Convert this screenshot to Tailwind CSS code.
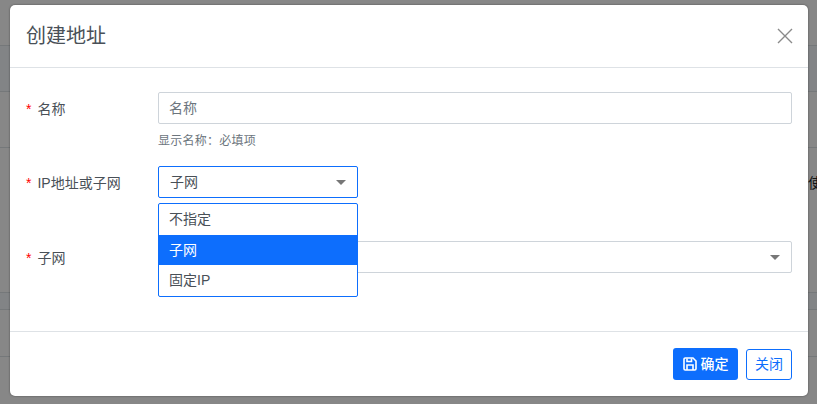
<!DOCTYPE html>
<html lang="zh">
<head>
    <meta charset="UTF-8">
    <title>创建地址</title>
    <script src="https://cdn.jsdelivr.net/npm/@tailwindcss/browser@4"></script>
</head>
<body class="relative w-[817px] h-[404px] overflow-hidden bg-white font-['Liberation_Sans','Noto_Sans_CJK_SC',sans-serif] text-[14px] text-[#212529]">
    <!-- page behind the dialog -->
    <div class="absolute inset-0 bg-white">
        <div class="absolute inset-x-0 top-[45px] h-[47px] border-y border-[#dee2e6] bg-[#f6fafe]"></div>
        <div class="absolute inset-x-0 top-[92px] h-[56px] border-b border-[#dee2e6]"></div>
        <div class="absolute inset-x-0 top-[292px] h-[18px] border-y border-[#dee2e6] bg-[#f6fafe]"></div>
        <div class="absolute inset-x-0 top-[309px] h-[48px] border-b border-[#dee2e6]"></div>
        <div class="absolute right-0 top-[174px] w-[9px] overflow-hidden text-[14px] leading-[18px] text-[#212529]">使</div>
    </div>
    <div class="absolute inset-0 bg-black/47"></div>

    <!-- dialog -->
    <div class="absolute left-[10px] top-[5px] flex h-[391px] w-[798px] flex-col rounded-[5px] bg-white shadow-[0_0_2px_rgba(0,0,0,0.5)]">
        <div class="flex h-[63px] items-center justify-between border-b border-[#dee2e6] pl-[16px] pr-[15px]">
            <h5 class="text-[20px] leading-[24px] text-[#495057]">创建地址</h5>
            <svg class="h-[16px] w-[16px]" viewBox="0 0 16 16" fill="none" stroke="#8a8a8a" stroke-width="1.4"><path d="M1 1L15 15M15 1L1 15"/></svg>
        </div>

        <div class="flex-1 px-[16px] pt-[24px]">
            <div class="flex">
                <label class="flex h-[32px] w-[132px] items-center pt-[2px] text-[#495057]"><span class="mr-[6px] text-[#f00]">*</span>名称</label>
                <div class="flex-1">
                    <div class="flex h-[32px] items-center rounded-[2px] border border-[#ced4da] px-[10px] text-[#6c757d]">名称</div>
                    <p class="mt-[8px] text-[12px] leading-[18px] tracking-[0.25px] text-[#6c757d]">显示名称：必填项</p>
                </div>
            </div>

            <div class="relative mt-[16px] flex">
                <label class="flex h-[32px] w-[132px] items-center pt-[2px] text-[#495057]"><span class="mr-[6px] text-[#f00]">*</span>IP地址或子网</label>
                <div class="flex h-[32px] w-[200px] items-center justify-between rounded-[2px] border border-[#0d6efd] pl-[11px] pr-[11px] text-[#495057]">
                    <span>子网</span>
                    <span class="h-0 w-0 border-x-[5px] border-t-[5px] border-x-transparent border-t-[#777]"></span>
                </div>
                <!-- open dropdown -->
                <ul class="absolute left-[132px] top-[37px] z-10 w-[200px] rounded-[2px] border border-[#0d6efd] bg-white text-[#495057]">
                    <li class="flex h-[31px] items-center pl-[10px]">不指定</li>
                    <li class="flex h-[30px] items-center bg-[#0d6efd] pl-[10px] text-white">子网</li>
                    <li class="flex h-[31px] items-center pl-[10px]">固定IP</li>
                </ul>
            </div>

            <div class="mt-[43px] flex">
                <label class="flex h-[32px] w-[132px] items-center pt-[2px] text-[#495057]"><span class="mr-[6px] text-[#f00]">*</span>子网</label>
                <div class="flex h-[32px] flex-1 items-center justify-end rounded-[2px] border border-[#ced4da] pr-[11px]">
                    <span class="h-0 w-0 border-x-[5px] border-t-[5px] border-x-transparent border-t-[#777]"></span>
                </div>
            </div>
        </div>

        <div class="flex h-[65px] items-center justify-end gap-[8px] border-t border-[#dee2e6] pr-[16px]">
            <button class="flex h-[32px] w-[65px] items-center justify-center gap-[4px] rounded-[3px] bg-[#0d6efd] font-medium text-white">
                <svg class="h-[14px] w-[14px]" viewBox="0 0 14 14" fill="none" stroke="white" stroke-width="1.6"><path d="M1 2.2A1.2 1.2 0 0 1 2.2 1H10L13 4V11.8A1.2 1.2 0 0 1 11.8 13H2.2A1.2 1.2 0 0 1 1 11.8Z"/><path d="M4 1.5V4.5H8.5V1.5M4 13V8H10V13"/></svg>
                确定
            </button>
            <button class="flex h-[31px] w-[46px] items-center justify-center rounded-[3px] border border-[#0d6efd] bg-white text-[#0d6efd]">关闭</button>
        </div>
    </div>
</body>
</html>
